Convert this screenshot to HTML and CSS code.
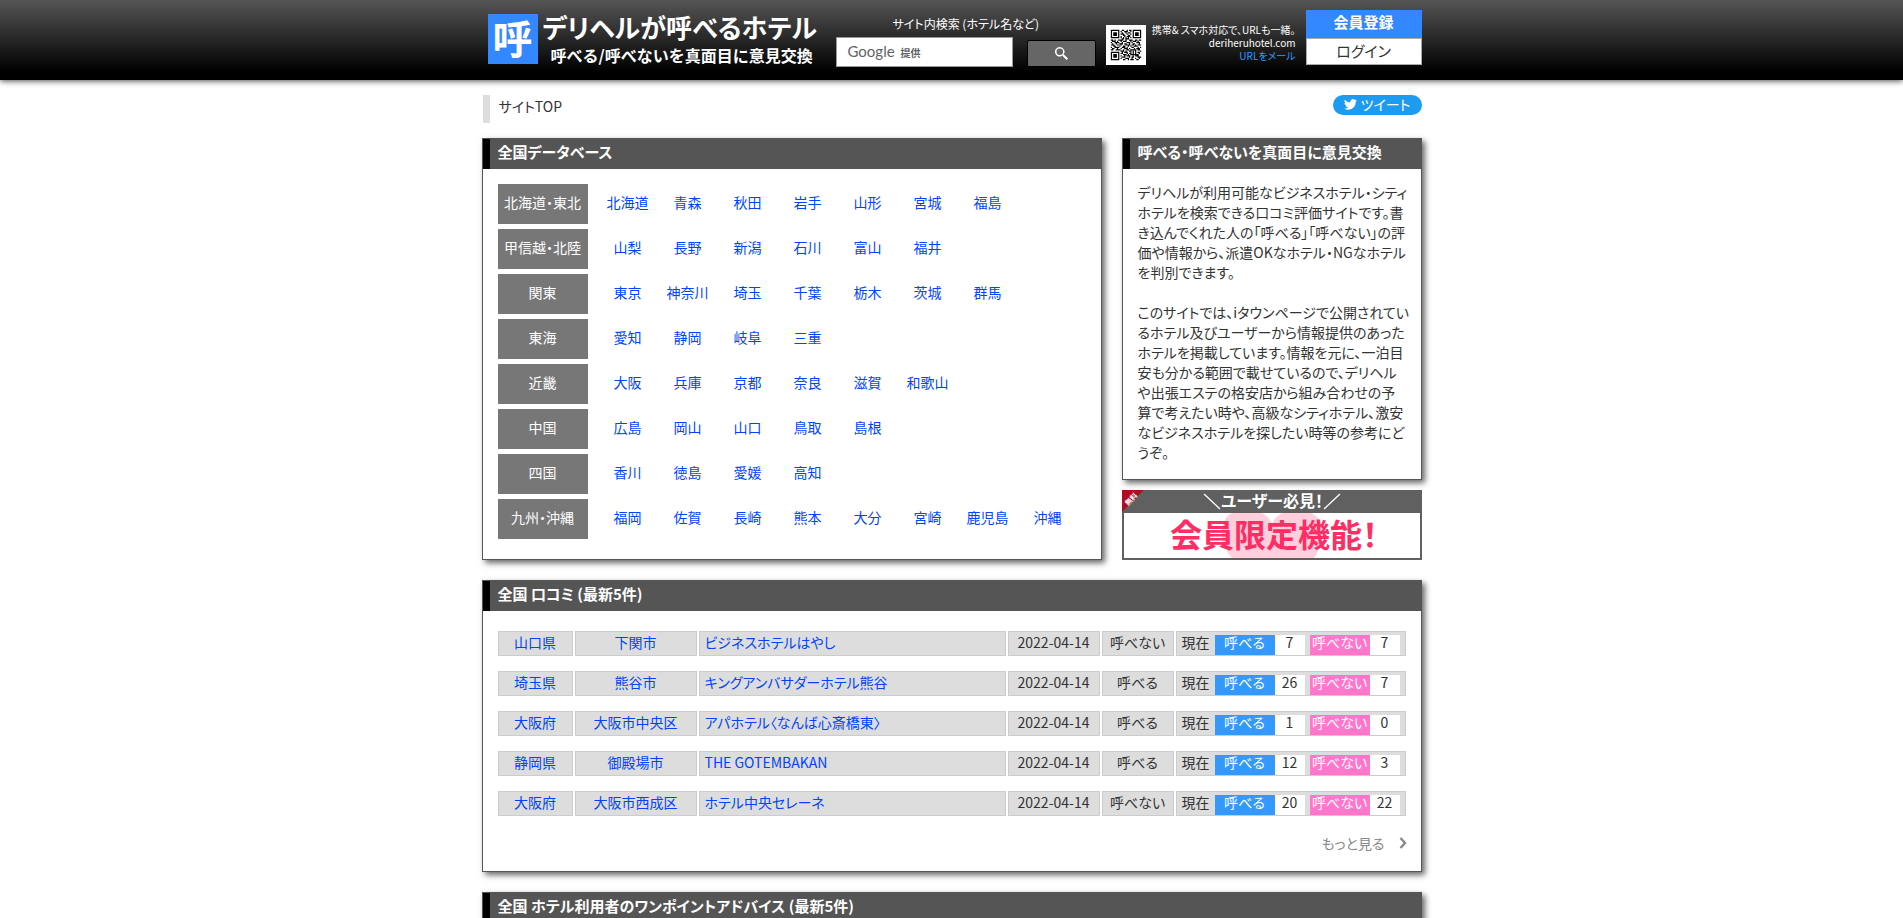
FILE: index.html
```
<!DOCTYPE html>
<html lang="ja">
<head>
<meta charset="utf-8">
<title>デリヘルが呼べるホテル</title>
<link rel="stylesheet" href="styles.css">
</head>
<body>
<header class="site-header">
  <div class="wrap header-row">
    <a class="logo" href="#">
      <span class="logo-mark">呼</span>
      <span class="logo-text">
        <span class="logo-title">デリヘルが呼べるホテル</span>
        <span class="logo-sub">呼べる/呼べないを真面目に意見交換</span>
      </span>
    </a>
    <form class="search">
      <label class="search-label" for="q">サイト内検索 (ホテル名など)</label>
      <div class="search-row">
        <div class="search-field">
          <input class="search-input" id="q" type="text">
          <span class="search-brand"><span class="brand-g">Google</span><span class="brand-by">提供</span></span>
        </div>
        <button class="search-button" type="button" aria-label="検索">
          <svg width="13" height="13" viewBox="0 0 13 13"><path d="M4.8 0a4.8 4.8 0 0 1 3.8 7.6l.3.3h.6L13 11.6 11.600 13 8 9.400v-.6l-.3-.2A4.800 4.800 0 1 1 4.800 0zm0 1.500a3.300 3.300 0 1 0 0 6.600 3.300 3.300 0 0 0 0-6.600z" fill="#fff"/></svg>
        </button>
      </div>
    </form>
    <svg class="qr" width="40" height="40" viewBox="-4 -4 33 33">
      <rect x="-4" y="-4" width="33" height="33" fill="#fff"/>
      <g fill="none" stroke="#000">
        <path d="M.5.5h6v6h-6zM18.500.5h6v6h-6zM.5 18.500h6v6h-6zM16.500 16.500h4v4h-4z"/>
        <path d="M2 3.500h3M20 3.500h3M2 21.500h3M18 18.500h1" stroke-width="3"/>
        <path d="M9 .5h2M13 .5h1M15 .5h2M8 1.500h1M11 1.500h3M16 1.500h1M9 2.500h1M12 2.500h1M14 2.500h2M8 3.500h3M13 3.500h1M16 3.500h1M10 4.500h2M14 4.500h2M8 5.500h1M11 5.500h1M13 5.500h3M8 6.500h1M10 6.500h1M12 6.500h1M14 6.500h1M16 6.500h1M9 7.500h2M12 7.500h3M0 8.500h2M3 8.500h1M6 8.500h4M12 8.500h1M15 8.500h3M20 8.500h2M23 8.500h2M1 9.500h3M5 9.500h1M8 9.500h1M10 9.500h3M16 9.500h1M18 9.500h3M22 9.500h1M0 10.500h1M3 10.500h4M9 10.500h1M13 10.500h3M17 10.500h1M21 10.500h3M1 11.500h1M4 11.500h1M7 11.500h3M11 11.500h2M15 11.500h1M18 11.500h2M23 11.500h1M0 12.500h3M5 12.500h2M8 12.500h1M12 12.500h4M17 12.500h2M20 12.500h1M22 12.500h3M2 13.500h2M7 13.500h1M10 13.500h2M14 13.500h1M16 13.500h1M19 13.500h3M0 14.500h1M3 14.500h4M9 14.500h3M13 14.500h1M17 14.500h2M22 14.500h1M24 14.500h1M1 15.500h2M5 15.500h1M8 15.500h1M11 15.500h3M15 15.500h1M19 15.500h1M21 15.500h3M0 16.500h2M4 16.500h4M10 16.500h1M13 16.500h2M22 16.500h2M8 17.500h3M12 17.500h1M15 17.500h1M24 17.500h1M9 18.500h1M11 18.500h3M22 18.500h2M8 19.500h2M13 19.500h1M15 19.500h1M23 19.500h1M10 20.500h3M14 20.500h1M21 20.500h2M8 21.500h1M11 21.500h1M13 21.500h3M18 21.500h1M20 21.500h3M9 22.500h3M15 22.500h1M17 22.500h2M22 22.500h3M8 23.500h1M12 23.500h3M17 23.500h1M20 23.500h1M23 23.500h1M10 24.500h2M14 24.500h1M16 24.500h3M21 24.500h2"/>
      </g>
    </svg>
    <p class="mobile-note">携帯&amp; スマホ対応で、URLも一緒。<br>deriheruhotel.com<br><a class="mail-link" href="#">URLをメール</a></p>
    <div class="account">
      <a class="account-join" href="#">会員登録</a>
      <a class="account-login" href="#">ログイン</a>
    </div>
  </div>
</header>

<main class="wrap">
  <div class="crumb-row">
    <div class="crumb">サイトTOP</div>
    <a class="tweet" href="#">
      <svg width="13" height="11" viewBox="0 0 24 20"><path d="M24 2.400a10 10 0 0 1-2.800.8A4.900 4.900 0 0 0 23.300.5a9.900 9.900 0 0 1-3.100 1.200 4.900 4.900 0 0 0-8.400 4.500A14 14 0 0 1 1.700 1a4.900 4.900 0 0 0 1.500 6.600 4.900 4.900 0 0 1-2.200-.6c0 2.300 1.600 4.400 3.900 4.900a4.900 4.900 0 0 1-2.200.1 4.900 4.900 0 0 0 4.600 3.400A9.900 9.900 0 0 1 0 17.500 14 14 0 0 0 21.500 5a10 10 0 0 0 2.500-2.600z" fill="#fff"/></svg>ツイート</a>
  </div>

  <div class="columns">
    <section class="panel database">
      <h2 class="panel-title">全国データベース</h2>
      <div class="regions">
        <div class="region"><h3 class="region-name">北海道・東北</h3><a href="#">北海道</a><a href="#">青森</a><a href="#">秋田</a><a href="#">岩手</a><a href="#">山形</a><a href="#">宮城</a><a href="#">福島</a></div>
        <div class="region"><h3 class="region-name">甲信越・北陸</h3><a href="#">山梨</a><a href="#">長野</a><a href="#">新潟</a><a href="#">石川</a><a href="#">富山</a><a href="#">福井</a></div>
        <div class="region"><h3 class="region-name">関東</h3><a href="#">東京</a><a href="#">神奈川</a><a href="#">埼玉</a><a href="#">千葉</a><a href="#">栃木</a><a href="#">茨城</a><a href="#">群馬</a></div>
        <div class="region"><h3 class="region-name">東海</h3><a href="#">愛知</a><a href="#">静岡</a><a href="#">岐阜</a><a href="#">三重</a></div>
        <div class="region"><h3 class="region-name">近畿</h3><a href="#">大阪</a><a href="#">兵庫</a><a href="#">京都</a><a href="#">奈良</a><a href="#">滋賀</a><a href="#">和歌山</a></div>
        <div class="region"><h3 class="region-name">中国</h3><a href="#">広島</a><a href="#">岡山</a><a href="#">山口</a><a href="#">鳥取</a><a href="#">島根</a></div>
        <div class="region"><h3 class="region-name">四国</h3><a href="#">香川</a><a href="#">徳島</a><a href="#">愛媛</a><a href="#">高知</a></div>
        <div class="region"><h3 class="region-name">九州・沖縄</h3><a href="#">福岡</a><a href="#">佐賀</a><a href="#">長崎</a><a href="#">熊本</a><a href="#">大分</a><a href="#">宮崎</a><a href="#">鹿児島</a><a href="#">沖縄</a></div>
      </div>
    </section>

    <aside class="side">
      <section class="panel about">
        <h2 class="panel-title">呼べる・呼べないを真面目に意見交換</h2>
        <p class="about-text">デリヘルが利用可能なビジネスホテル・シティ<br>ホテルを検索できる口コミ評価サイトです。書<br>き込んでくれた人の「呼べる」「呼べない」の評<br>価や情報から、派遣OKなホテル・NGなホテル<br>を判別できます。<br><br>このサイトでは、iタウンページで公開されてい<br>るホテル及びユーザーから情報提供のあった<br>ホテルを掲載しています。情報を元に、一泊目<br>安も分かる範囲で載せているので、デリヘル<br>や出張エステの格安店から組み合わせの予<br>算で考えたい時や、高級なシティホテル、激安<br>なビジネスホテルを探したい時等の参考にど<br>うぞ。</p>
      </section>
      <a class="banner" href="#">
        <svg class="banner-art" viewBox="0 0 300 70">
          <rect width="300" height="70" fill="#606060"/>
          <rect x="2" y="23" width="296" height="45" fill="#fff"/>
          <path d="M110 68C104 62 100 52 100 42 100 31 105 25 112 22H138Q147 26 150 34 153 26 162 22H188C196 26 200 33 200 42 200 52 197 62 192 68z" fill="#ffcfdd"/>
          <rect width="300" height="23" fill="#606060"/>
          <path d="M0 0H22L0 22z" fill="#b00d23"/>
          <text class="banner-free" x="0" y="0" transform="translate(11 11) rotate(-45)">無料</text>
          <path d="M82 4 98 19M218 4 202 19" stroke="#fff" stroke-width="1.300"/>
          <text class="banner-top" x="150" y="17">ユーザー必見！</text>
          <text class="banner-main" x="152" y="57">会員限定機能！</text>
        </svg>
      </a>
    </aside>
  </div>

  <section class="panel reviews">
    <h2 class="panel-title">全国 口コミ (最新5件)</h2>
    <table class="review-table">
      <colgroup><col class="c-pref"><col class="c-city"><col><col class="c-date"><col class="c-vote"><col class="c-now"></colgroup>
      <tbody>
      <tr><td><a href="#">山口県</a></td><td><a href="#">下関市</a></td><td class="hotel"><a href="#">ビジネスホテルはやし</a></td><td>2022-04-14</td><td>呼べない</td><td><div class="tally"><span class="now">現在</span><span class="yes">呼べる</span><span class="num">7</span><span class="no">呼べない</span><span class="num">7</span></div></td></tr>
      <tr><td><a href="#">埼玉県</a></td><td><a href="#">熊谷市</a></td><td class="hotel"><a href="#">キングアンバサダーホテル熊谷</a></td><td>2022-04-14</td><td>呼べる</td><td><div class="tally"><span class="now">現在</span><span class="yes">呼べる</span><span class="num">26</span><span class="no">呼べない</span><span class="num">7</span></div></td></tr>
      <tr><td><a href="#">大阪府</a></td><td><a href="#">大阪市中央区</a></td><td class="hotel"><a href="#">アパホテル〈なんば心斎橋東〉</a></td><td>2022-04-14</td><td>呼べる</td><td><div class="tally"><span class="now">現在</span><span class="yes">呼べる</span><span class="num">1</span><span class="no">呼べない</span><span class="num">0</span></div></td></tr>
      <tr><td><a href="#">静岡県</a></td><td><a href="#">御殿場市</a></td><td class="hotel"><a href="#">THE GOTEMBAKAN</a></td><td>2022-04-14</td><td>呼べる</td><td><div class="tally"><span class="now">現在</span><span class="yes">呼べる</span><span class="num">12</span><span class="no">呼べない</span><span class="num">3</span></div></td></tr>
      <tr><td><a href="#">大阪府</a></td><td><a href="#">大阪市西成区</a></td><td class="hotel"><a href="#">ホテル中央セレーネ</a></td><td>2022-04-14</td><td>呼べない</td><td><div class="tally"><span class="now">現在</span><span class="yes">呼べる</span><span class="num">20</span><span class="no">呼べない</span><span class="num">22</span></div></td></tr>
      </tbody>
    </table>
    <a class="more" href="#">もっと見る<svg width="8" height="12" viewBox="0 0 8 12"><path d="M1.500 1 6 6 1.500 11" fill="none" stroke="#888" stroke-width="2.400"/></svg></a>
  </section>

  <section class="panel">
    <h2 class="panel-title">全国 ホテル利用者のワンポイントアドバイス (最新5件)</h2>
  </section>
</main>
</body>
</html>
```
FILE: styles.css
```
* { box-sizing: border-box; }
html { overflow: hidden; }
body {
  margin: 0;
  background: #fff;
  color: #333;
  font-family: "Noto Sans CJK JP", "Liberation Sans", sans-serif;
  font-size: 14px;
  line-height: 20px;
  font-feature-settings: "palt";
}
a { color: #04f; text-decoration: none; }
h2, h3, p { margin: 0; }
.wrap { max-width: 940px; margin: 0 auto; }

.site-header {
  height: 80px;
  background: linear-gradient(#555, #000 90%);
  box-shadow: 0 1px 6px rgba(0, 0, 0, .7);
  color: #fff;
}
.header-row { display: flex; align-items: flex-start; }
.logo { display: flex; gap: 5px; width: 348px; padding: 14px 0 0 6px; color: #fff; }
.logo-mark {
  width: 50px; height: 50px;
  background: #38f;
  font-size: 40px; font-weight: 700; line-height: 46px; text-align: center;
}
.logo-text { display: flex; flex-direction: column; white-space: nowrap; }
.logo-title { font-size: 26px; font-weight: 700; line-height: 26px; }
.logo-sub { padding: 5px 0 0 8px; font-size: 16px; font-weight: 700; line-height: 20px; font-feature-settings: normal; }

.search { width: 276px; padding: 14px 0 0 6px; }
.search-label { display: block; padding-left: 57px; font-size: 12px; line-height: 20px; white-space: nowrap; }
.search-row { display: flex; align-items: flex-end; gap: 14px; margin-top: 3px; }
.search-field { position: relative; width: 177px; }
.search-input { display: block; width: 100%; height: 30px; border: 1px solid #999; background: #fff; }
.search-brand {
  position: absolute; left: 12px; top: 4px;
  display: flex; gap: 6px; align-items: baseline;
  color: #5f6368; line-height: 20px; pointer-events: none;
}
.brand-g { font-family: Lato, sans-serif; font-size: 15px; }
.brand-by { font-size: 10px; font-weight: 700; }
.search-button {
  display: flex; align-items: center; justify-content: center;
  width: 69px; height: 27px; padding: 0;
  border: 1px solid #000; border-radius: 2px; background: #666;
}
.qr { flex: none; margin-top: 25px; }
.mobile-note { width: 150px; padding-top: 23px; font-size: 10px; line-height: 13px; text-align: right; white-space: nowrap; }
.mail-link { color: #39f; }
.account { width: 116px; margin: 10px 0 0 10px; text-align: center; }
.account a { display: block; }
.account-join { height: 28px; background: #38f; color: #fff; font-weight: 700; line-height: 24px; font-size: 15px; }
.account-login { height: 27px; border: 1px solid #aaa; background: #fff; color: #333; line-height: 23px; font-size: 15px; }

.crumb-row { display: flex; justify-content: space-between; align-items: flex-start; padding-top: 15px; }
.crumb { margin-left: 1px; padding-left: 9px; border-left: 7px solid #ddd; height: 28px; line-height: 22px; }
.tweet {
  display: flex; align-items: center; justify-content: center; gap: 4px;
  width: 89px; height: 20px; border-radius: 10px;
  background: #1d9bf0; color: #fff; line-height: 18px; padding-bottom: 2px;
}
.columns { display: flex; gap: 20px; margin: 15px 0 20px; }
.panel { border: 1px solid #555; background: #fff; box-shadow: 3px 3px 6px rgba(0, 0, 0, .6); }
.panel-title {
  height: 30px; padding-left: 8px;
  border-left: 7px solid #000;
  background: #555; color: #fff;
  font-size: 15px; font-weight: 700; line-height: 26px;
}
.database { flex: 1; }
.regions { display: grid; gap: 5px; padding: 15px 15px 20px; }
.region { display: flex; line-height: 36px; }
.region a { width: 60px; text-align: center; }
.region-name {
  width: 90px; height: 40px; margin-right: 10px;
  background: #777; color: #fff;
  font-size: 14px; font-weight: 400; text-align: center;
}
.side { display: flex; flex-direction: column; gap: 10px; width: 300px; }
.about { flex: 1; }
.about-text { padding: 13px 0 17px 15px; white-space: nowrap; }
.banner, .banner-art { display: block; }
.banner-art { width: 100%; }
.banner-free { fill: #fff; font-size: 7px; font-weight: 700; text-anchor: middle; }
.banner-top { fill: #fff; font-size: 16px; font-weight: 700; text-anchor: middle; }
.banner-main { fill: #ff2d64; font-size: 32px; font-weight: 700; text-anchor: middle; }

.reviews { margin-bottom: 20px; padding-bottom: 18px; }
.review-table { width: calc(100% - 26px); margin: 5px 13px 0; table-layout: fixed; border-collapse: separate; border-spacing: 2px 15px; }
.review-table td { height: 25px; padding: 0; border: 1px solid #ccc; background: #ddd; line-height: 20px; text-align: center; vertical-align: top; white-space: nowrap; }
.c-pref { width: 75px; }
.c-city { width: 122px; }
.c-date { width: 92px; }
.c-vote { width: 72px; }
.c-now { width: 230px; }
.review-table .hotel { padding-left: 5px; text-align: left; }
.tally { display: flex; height: 23px; align-items: flex-end; }
.tally span { height: 20px; line-height: 14px; }
.tally .now { width: 38px; }
.yes, .no { width: 60px; color: #fff; }
.yes { background: #39f; }
.no { margin-left: 5px; background: #f7c; }
.num { width: 30px; background: #fff; }
.more { display: flex; justify-content: flex-end; align-items: center; gap: 14px; padding: 2px 14px 0; color: #888; line-height: 20px; }
```
